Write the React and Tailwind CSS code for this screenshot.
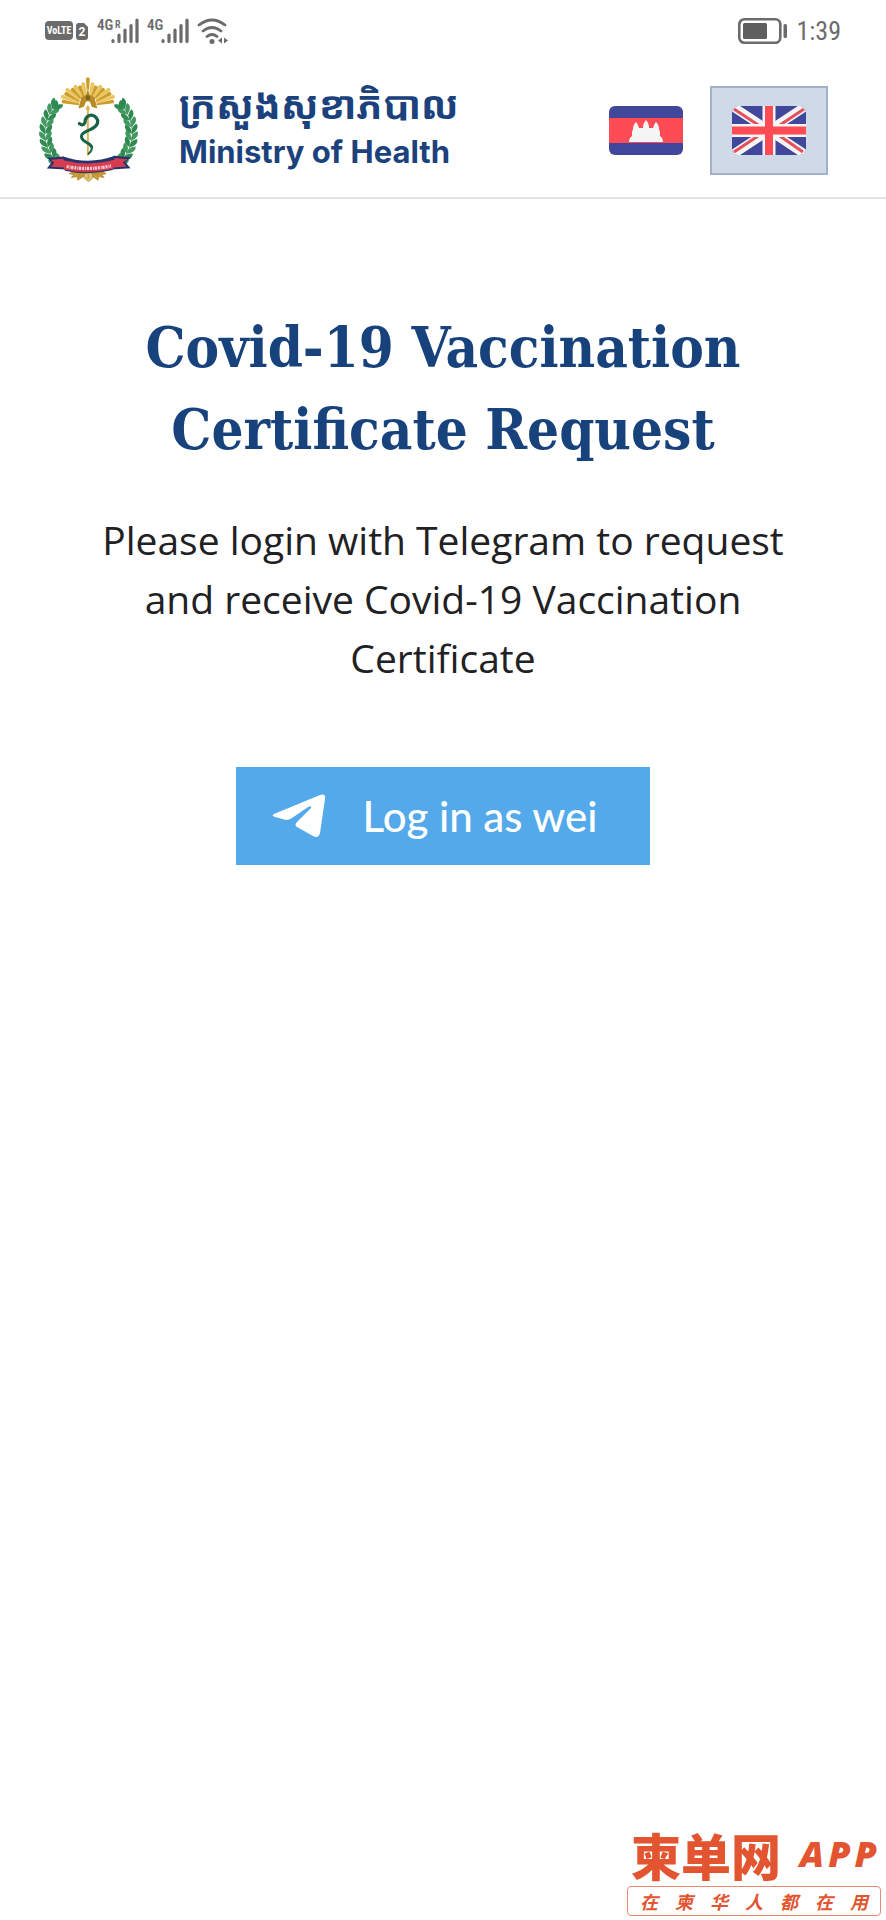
const LEAF_ANGLES = [139, 148, 157, 166, 175, 184, 193, 202, 211, 219];

// [angle, length] of each ray in the crest
const RAYS = [
  [-80, 82], [-70, 88], [-61, 82], [-52, 86], [-43, 74], [-33, 76], [-23, 68], [-12, 74],
  [0, 88],
  [12, 74], [23, 68], [33, 76], [43, 74], [52, 86], [61, 82], [70, 88], [80, 82],
];

function VolteBadge() {
  return (
    <svg viewBox="0 0 44 20" className="h-5 w-11" role="img" aria-label="VoLTE SIM 2">
      <rect x="0" y="0" width="28" height="19" rx="4" fill="#6b6b6b" />
      <text x="14" y="13" textAnchor="middle" fontSize="10" fontWeight="700" fill="#fff" fontFamily="'Roboto Condensed', Roboto, sans-serif">
        VoLTE
      </text>
      <path d="M34 2h5l4 4v10a3 3 0 0 1-3 3h-6a3 3 0 0 1-3-3V5a3 3 0 0 1 3-3z" fill="#6b6b6b" />
      <text x="37" y="15" textAnchor="middle" fontSize="12" fontWeight="700" fill="#fff" fontFamily="Roboto, sans-serif">
        2
      </text>
    </svg>
  );
}

function Signal({ roaming }) {
  return (
    <svg viewBox="0 0 42 30" className="h-[30px] w-[42px]" role="img" aria-label="Mobile signal">
      <g fill="#6b6b6b" fontFamily="'Roboto Condensed', Roboto, sans-serif" fontWeight="600">
        <text x="0" y="14" fontSize="15">4G</text>
        {roaming && <text x="18" y="12" fontSize="10">R</text>}
      </g>
      <path d="M16 24.500v1M22 19v6.500M28 14v11.500M34 9.500v16M40 4v21.500" stroke="#6b6b6b" strokeWidth="3.200" strokeLinecap="round" />
    </svg>
  );
}

function Wifi() {
  return (
    <svg viewBox="0 0 32 27" className="h-[27px] w-8" role="img" aria-label="Wi-Fi">
      <g fill="none" stroke="#6b6b6b" strokeWidth="2.800" strokeLinecap="round">
        <path d="M2 7q13-10 26 0M6 13q9-7 18 0M10 18.500q5-4 10 0" />
      </g>
      <circle cx="15" cy="23.500" r="2.500" fill="#6b6b6b" />
      <path d="M25 19.500v6l-4-3zM27 19.500v6l4-3z" fill="#6b6b6b" />
    </svg>
  );
}

function Battery() {
  return (
    <svg viewBox="0 0 50 26" className="h-[26px] w-[50px]" role="img" aria-label="Battery">
      <rect x="1.300" y="1.300" width="41" height="23.400" rx="5" fill="none" stroke="#6b6b6b" strokeWidth="2.600" />
      <rect x="5" y="5" width="24" height="16" rx="1.500" fill="#5f5f5f" />
      <rect x="45.500" y="6" width="3.500" height="14" rx="1.500" fill="#6b6b6b" />
    </svg>
  );
}

function Laurel() {
  return (
    <g>
      <path d="M78 104Q42 142 42 198Q44 242 76 280" fill="none" stroke="#4c9a68" strokeWidth="3" />
      {LEAF_ANGLES.map((angle, i) => {
        const rad = (angle * Math.PI) / 180;
        const x = 177 + 132 * Math.cos(rad);
        const y = 193 + 132 * Math.sin(rad);
        return (
          <g key={angle} transform={`translate(${x} ${y}) rotate(${angle - 180})`} fill={i % 2 ? '#2f8a52' : '#43995f'}>
            <path d="M0 12C-18 4-23-8-17-18C-4-12 0-4 0 12z" />
            <path d="M0 12C18 4 23-8 17-18C4-12 0-4 0 12z" />
          </g>
        );
      })}
      <path d="M76 116C66 110 68 98 78 92C87 99 86 110 76 116z" fill="#2f8a52" />
    </g>
  );
}

function Emblem() {
  return (
    <svg viewBox="22 16 316 336" className="h-[110px] w-[103px] shrink-0" role="img" aria-label="Ministry of Health emblem">
      {RAYS.map(([angle, length], i) => (
        <path
          key={angle}
          d={`M-2 -20L-6 ${-length + 3}L0 ${-length}L6 ${-length + 3}L2 -20z`}
          transform={`translate(175 110) rotate(${angle})`}
          fill={i % 2 ? '#e8c65c' : '#cf9c2b'}
        />
      ))}
      <path d="M175 56l8 22 16 10 5 30h-58l5-30 16-10z" fill="#fff" />
      <path d="M175 58l6 18 15 8 2 12 6 22-17-5-5-14q-7-6-14 0l-5 14-17 5 6-22 2-12 15-8z" fill="#b98a25" />
      <path d="M168 82q7-10 14 0l-2 10h-10z" fill="#7f6224" />
      <Laurel />
      <g transform="translate(354 0) scale(-1 1)">
        <Laurel />
      </g>
      <path d="M175 112v148" stroke="#d9b45a" strokeWidth="6" strokeLinecap="round" />
      <circle cx="175" cy="118" r="6" fill="#d9b45a" />
      <g fill="none" stroke="#176348" strokeLinecap="round" strokeLinejoin="round">
        <path d="M149 164C160 174 168 163 167 153C172 139 186 134 196 142C212 155 206 170 188 180" strokeWidth="10" />
        <path d="M188 180C166 190 152 194 156 208C160 222 182 222 187 236" strokeWidth="9" />
        <path d="M187 236C189 247 183 252 177 257" strokeWidth="6" />
      </g>
      <g fill="#c99a34" stroke="#a57821" strokeWidth="2">
        <path d="M174 306C158 298 136 309 118 318l14 3-8 9 18-3 2 11 17-11 14 8 15-8 16 11 2-11 17 3-8-9 14-3C216 309 191 298 174 306z" />
        <path d="M176 311c-12 4-19 16-7 25l8 6 8-6c12-9 3-21-9-25z" fill="#e2c16c" />
        <path d="M146 320l16-5M206 320l-16-5M176 318v15" fill="none" />
      </g>
      <path d="M50 270l50-5 22 12-14 28-59-3 15-18z" fill="#24336f" />
      <path d="M60 275l40-3 12 8-11 19-39-2 10-13z" fill="#d63b50" />
      <path d="M308 268l-50-5-26 14 16 28 58-4-16-18z" fill="#24336f" />
      <path d="M298 274l-40-4-14 9 12 20 37-3-11-13z" fill="#d63b50" />
      <path d="M99 265Q177 292 258 263L251 307Q177 326 104 309z" fill="#27356f" />
      <path d="M96 276Q177 298 262 274L253 303Q177 321 103 306z" fill="#d63b50" />
      <path d="M110 296Q177 309 246 294" fill="none" stroke="#f6cfd2" strokeWidth="10" strokeDasharray="6 3 3 2 7 3" />
    </svg>
  );
}

function CambodiaFlag() {
  return (
    <svg viewBox="0 0 74 49" className="h-[49px] w-[74px]" aria-hidden="true">
      <rect width="74" height="49" rx="6" fill="#41479b" />
      <path d="M0 12h74v25H0z" fill="#ff4b55" />
      <path
        d="M20 36c0-4 2-5 3-6v-4l1-3c0-3 1-5 3-7 2 2 2 4 3 6h4c0-4 1-5 3-8 2 3 3 4 3 8h4c1-2 1-4 3-6 2 2 3 4 3 7l1 3v4c1 1 3 2 3 6z"
        fill="#f5f5f5"
      />
    </svg>
  );
}

function UkFlag() {
  return (
    <svg viewBox="0 0 74 49" className="h-[49px] w-[74px]" aria-hidden="true">
      <clipPath id="uk-clip">
        <rect width="74" height="49" rx="6" />
      </clipPath>
      <g clipPath="url(#uk-clip)">
        <path d="M0 0h74v49H0z" fill="#41479b" />
        <path d="M0 0l74 49M74 0L0 49" stroke="#f5f5f5" strokeWidth="9" />
        <path d="M2 3l28 18.500M72 3L45 21M45 28l26 18M29 28L2 46" stroke="#e5505c" strokeWidth="3" />
        <path d="M37 0v49M0 24.500h74" stroke="#f5f5f5" strokeWidth="13" />
        <path d="M37 0v49M0 24.500h74" stroke="#ff4b55" strokeWidth="8" />
      </g>
    </svg>
  );
}

function StatusBar() {
  return (
    <div className="flex h-[62px] items-center justify-between pr-[45px] pl-[45px] text-[#6b6b6b]">
      <div className="flex items-center gap-2">
        <VolteBadge />
        <Signal roaming />
        <Signal />
        <Wifi />
      </div>
      <div className="flex items-center gap-2">
        <Battery />
        <span className="font-['Roboto_Condensed',Roboto,sans-serif] text-[26px] leading-8">1:39</span>
      </div>
    </div>
  );
}

function Header() {
  return (
    <header className="flex items-center justify-between border-b-2 border-[#e4e4e4] pt-[13px] pr-[58px] pb-3 pl-[38px]">
      <div className="flex items-center gap-[38px]">
        <Emblem />
        <div className="flex flex-col pb-1 font-bold text-[#1b427c]">
          <span lang="km" className="font-['Noto_Sans_Khmer','Khmer_OS',sans-serif] text-[39px] leading-[48px] whitespace-nowrap">
            ក្រសួងសុខាភិបាល
          </span>
          <span className="font-[Inter,sans-serif] text-[31px] leading-[48px] whitespace-nowrap">Ministry of Health</span>
        </div>
      </div>
      <div className="flex gap-[5px]">
        <button type="button" aria-label="Khmer" className="border-2 border-transparent px-5 py-[18px]">
          <CambodiaFlag />
        </button>
        <button type="button" aria-label="English" aria-pressed="true" className="border-2 border-[#a0b1c8] bg-[#d0d9e8] px-5 py-[18px]">
          <UkFlag />
        </button>
      </div>
    </header>
  );
}

function Watermark() {
  return (
    <footer className="mt-auto mr-[5px] mb-1 flex w-[254px] flex-col self-end font-['Noto_Sans_CJK_SC',sans-serif] text-[#e25530]">
      <div className="flex items-center justify-between px-1 pb-1">
        <span lang="zh" className="text-[50px] leading-[56px] font-black">柬单网</span>
        <span className="flex gap-1 font-['Open_Sans',sans-serif] text-4xl font-extrabold italic">
          <span>A</span>
          <span>P</span>
          <span>P</span>
        </span>
      </div>
      <div lang="zh" className="flex justify-between rounded-sm border border-[#e58b73] px-3 text-lg leading-7 font-bold italic">
        {[...'在柬华人都在用'].map((char, i) => (
          <span key={i}>{char}</span>
        ))}
      </div>
    </footer>
  );
}

export default function App() {
  return (
    <div className="flex min-h-screen flex-col bg-white">
      <StatusBar />
      <Header />
      <main className="flex flex-col items-center px-[90px] pt-[107px] text-center">
        <h1 className="font-['DejaVu_Serif_Condensed','DejaVu_Serif',serif] text-[56px] leading-[82px] font-bold text-[#17427c]">
          Covid-19 Vaccination
          <br />
          Certificate Request
        </h1>
        <p className="mt-10 font-['Open_Sans',sans-serif] text-[39px] leading-[59px] text-[#212124]">
          Please login with Telegram to request
          <br />
          and receive Covid-19 Vaccination
          <br />
          Certificate
        </p>
        <button
          type="button"
          className="mt-20 flex h-[98px] items-center gap-9 bg-[#54a9eb] pr-[52px] pl-9 font-[Lato,sans-serif] text-[42px] leading-[48px] font-medium text-white"
        >
          <svg viewBox="0 0 54 44" className="h-11 w-[54px]" aria-hidden="true">
            <path
              d="M2 20L48 1Q54-1 53 5L48 39Q46.500 45 41 42L25 33Q22 31 25 28L39 14Q40 11 36 13L20 24Q17 26 14 26L3 23Q-1 22 2 20Z"
              fill="currentColor"
            />
          </svg>
          Log in as wei
        </button>
      </main>
      <Watermark />
    </div>
  );
}
